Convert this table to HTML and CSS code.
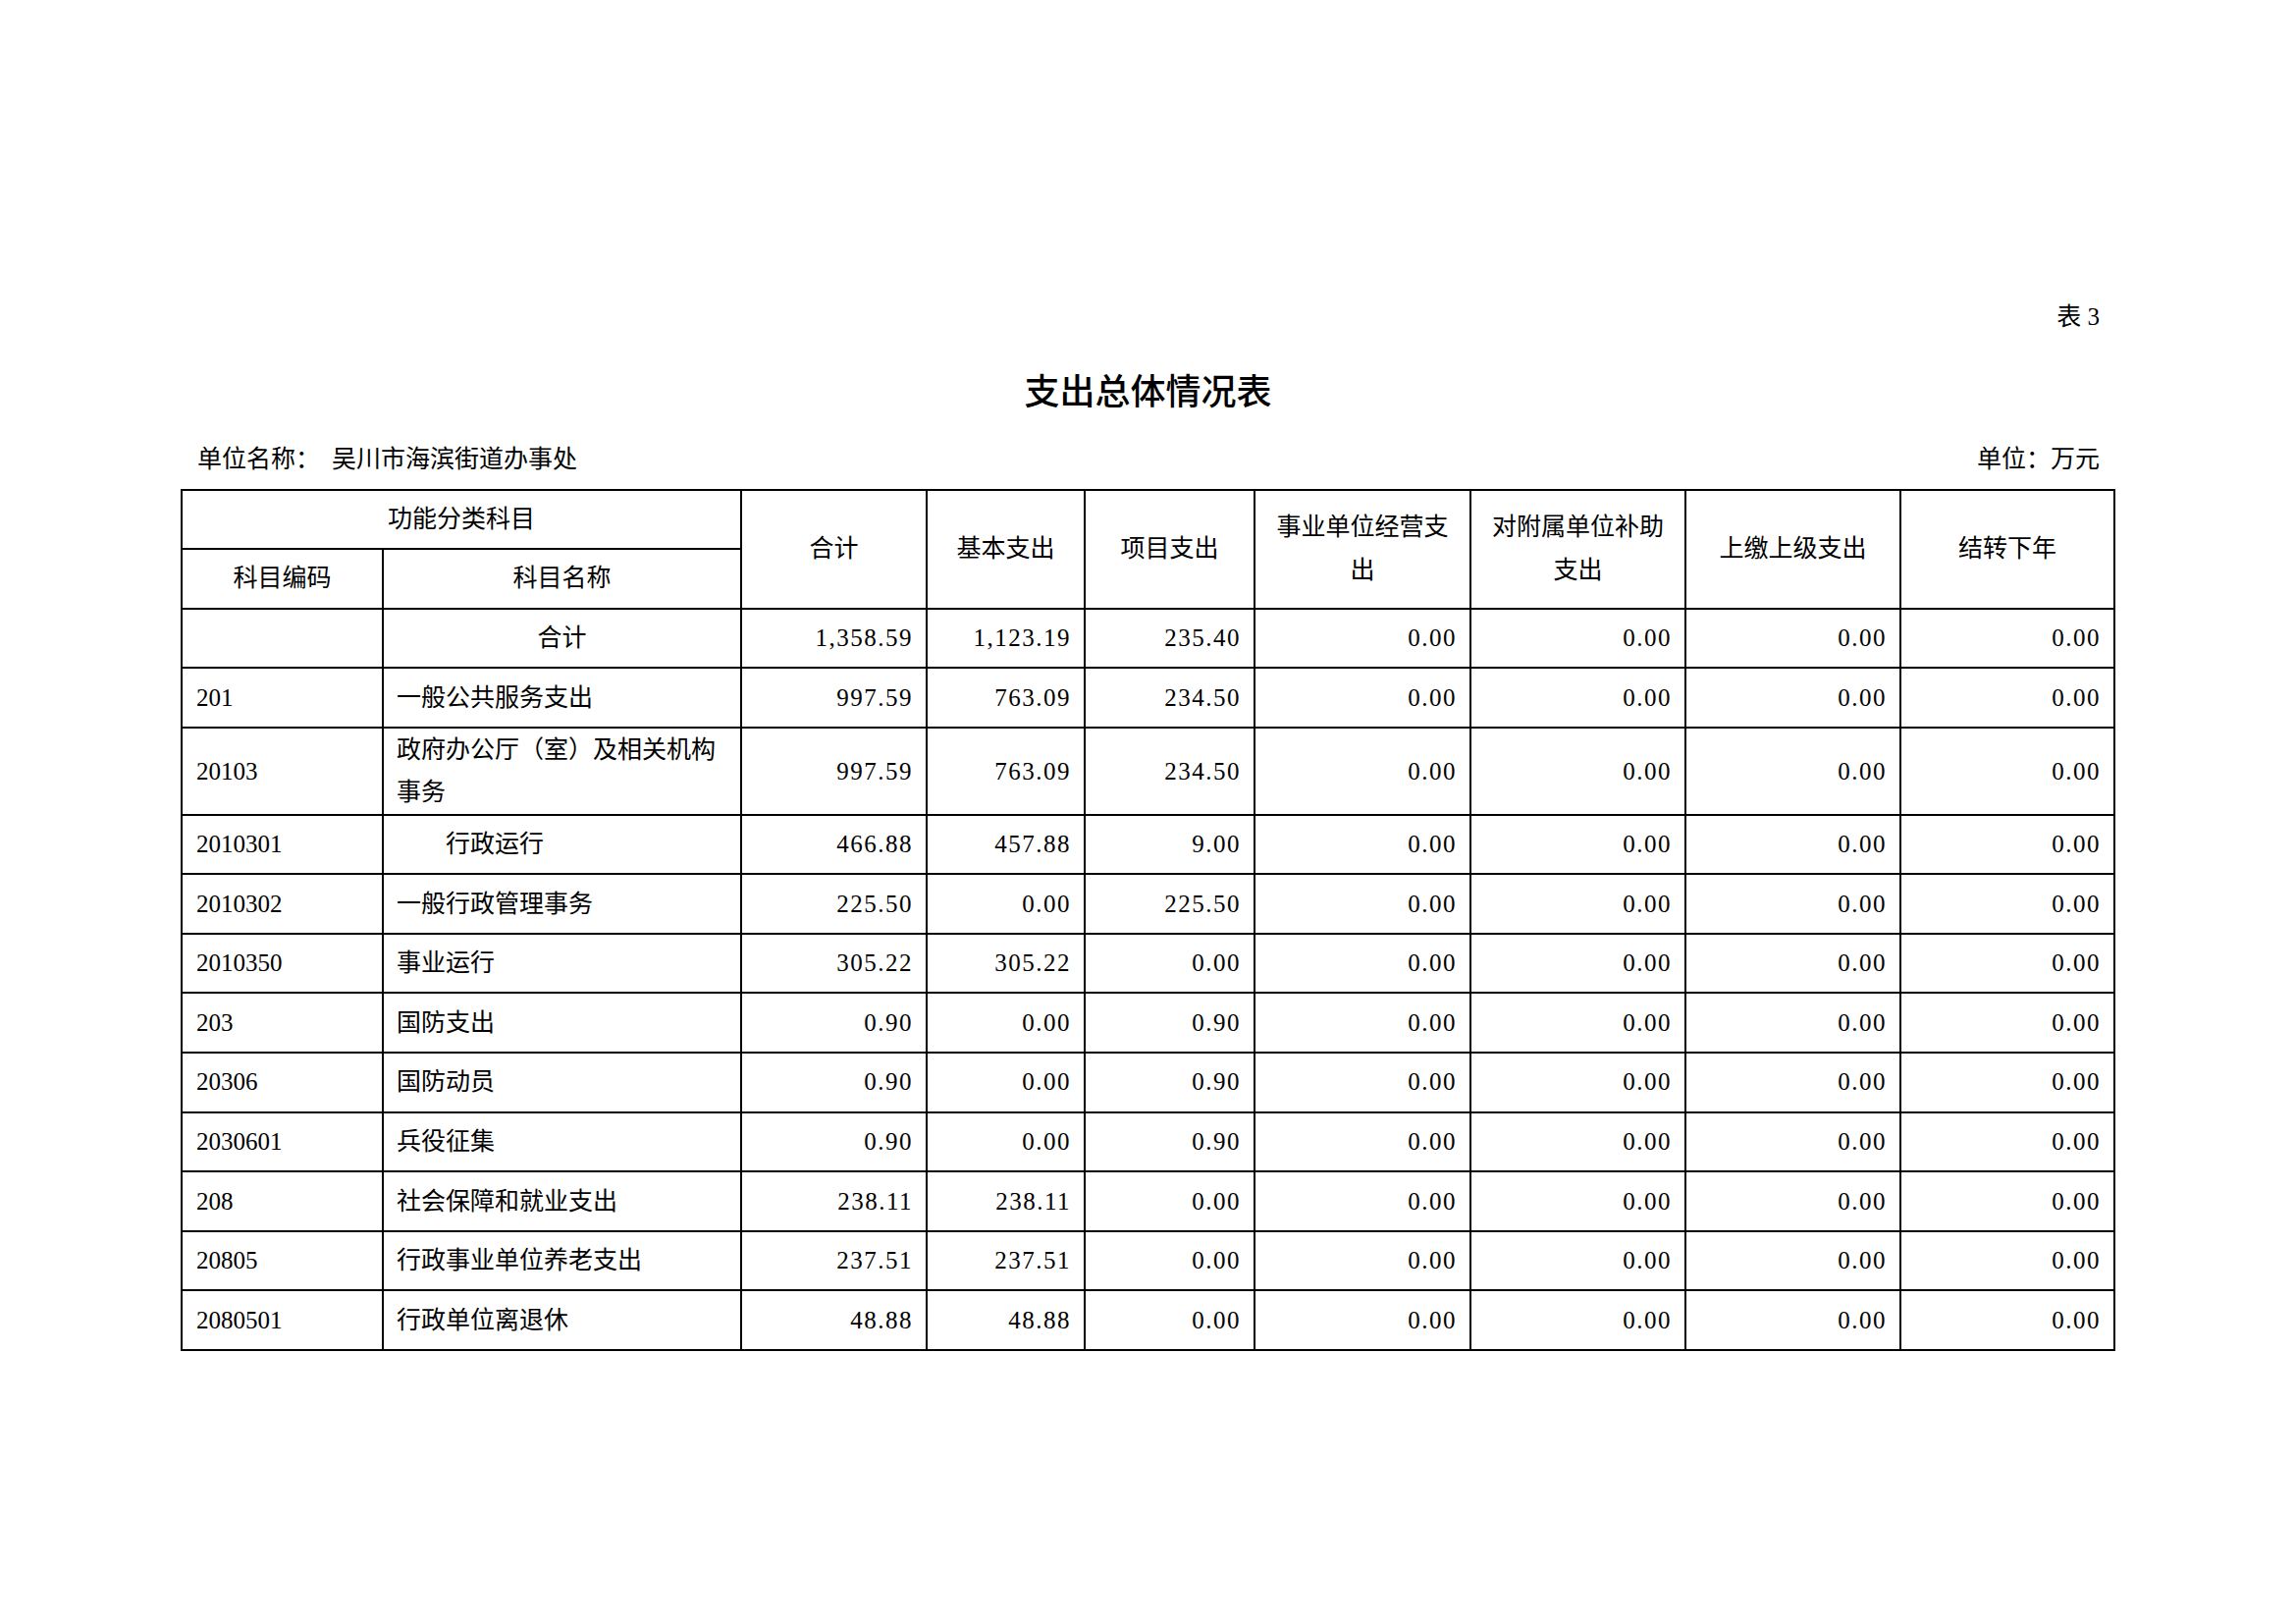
FILE: index.html
```html
<!DOCTYPE html>
<html lang="zh-CN">
<head>
<meta charset="utf-8">
<title>支出总体情况表</title>
<link rel="stylesheet" href="styles.css">
</head>
<body>
<div class="page">
  <div class="sheet">
    <div class="tag">表 3</div>
    <h1 class="title">支出总体情况表</h1>
    <div class="meta">
      <div class="meta-left">单位名称：<span class="unit">吴川市海滨街道办事处</span></div>
      <div class="meta-right">单位：万元</div>
    </div>
    <table class="report">
      <colgroup>
        <col class="c1"><col class="c2"><col class="c3"><col class="c4"><col class="c5"><col class="c6"><col class="c7"><col class="c8"><col class="c9">
      </colgroup>
      <thead>
        <tr class="h1">
          <th colspan="2">功能分类科目</th>
          <th rowspan="2">合计</th>
          <th rowspan="2">基本支出</th>
          <th rowspan="2">项目支出</th>
          <th rowspan="2">事业单位经营支出</th>
          <th rowspan="2">对附属单位补助支出</th>
          <th rowspan="2">上缴上级支出</th>
          <th rowspan="2">结转下年</th>
        </tr>
        <tr class="h2">
          <th>科目编码</th>
          <th>科目名称</th>
        </tr>
      </thead>
      <tbody>
        <tr><td class="code"></td><td class="name center">合计</td><td class="num">1,358.59</td><td class="num">1,123.19</td><td class="num">235.40</td><td class="num">0.00</td><td class="num">0.00</td><td class="num">0.00</td><td class="num">0.00</td></tr>
        <tr><td class="code">201</td><td class="name">一般公共服务支出</td><td class="num">997.59</td><td class="num">763.09</td><td class="num">234.50</td><td class="num">0.00</td><td class="num">0.00</td><td class="num">0.00</td><td class="num">0.00</td></tr>
        <tr class="tall"><td class="code">20103</td><td class="name">政府办公厅（室）及相关机构事务</td><td class="num">997.59</td><td class="num">763.09</td><td class="num">234.50</td><td class="num">0.00</td><td class="num">0.00</td><td class="num">0.00</td><td class="num">0.00</td></tr>
        <tr><td class="code">2010301</td><td class="name indent">行政运行</td><td class="num">466.88</td><td class="num">457.88</td><td class="num">9.00</td><td class="num">0.00</td><td class="num">0.00</td><td class="num">0.00</td><td class="num">0.00</td></tr>
        <tr><td class="code">2010302</td><td class="name">一般行政管理事务</td><td class="num">225.50</td><td class="num">0.00</td><td class="num">225.50</td><td class="num">0.00</td><td class="num">0.00</td><td class="num">0.00</td><td class="num">0.00</td></tr>
        <tr><td class="code">2010350</td><td class="name">事业运行</td><td class="num">305.22</td><td class="num">305.22</td><td class="num">0.00</td><td class="num">0.00</td><td class="num">0.00</td><td class="num">0.00</td><td class="num">0.00</td></tr>
        <tr><td class="code">203</td><td class="name">国防支出</td><td class="num">0.90</td><td class="num">0.00</td><td class="num">0.90</td><td class="num">0.00</td><td class="num">0.00</td><td class="num">0.00</td><td class="num">0.00</td></tr>
        <tr><td class="code">20306</td><td class="name">国防动员</td><td class="num">0.90</td><td class="num">0.00</td><td class="num">0.90</td><td class="num">0.00</td><td class="num">0.00</td><td class="num">0.00</td><td class="num">0.00</td></tr>
        <tr><td class="code">2030601</td><td class="name">兵役征集</td><td class="num">0.90</td><td class="num">0.00</td><td class="num">0.90</td><td class="num">0.00</td><td class="num">0.00</td><td class="num">0.00</td><td class="num">0.00</td></tr>
        <tr><td class="code">208</td><td class="name">社会保障和就业支出</td><td class="num">238.11</td><td class="num">238.11</td><td class="num">0.00</td><td class="num">0.00</td><td class="num">0.00</td><td class="num">0.00</td><td class="num">0.00</td></tr>
        <tr><td class="code">20805</td><td class="name">行政事业单位养老支出</td><td class="num">237.51</td><td class="num">237.51</td><td class="num">0.00</td><td class="num">0.00</td><td class="num">0.00</td><td class="num">0.00</td><td class="num">0.00</td></tr>
        <tr><td class="code">2080501</td><td class="name">行政单位离退休</td><td class="num">48.88</td><td class="num">48.88</td><td class="num">0.00</td><td class="num">0.00</td><td class="num">0.00</td><td class="num">0.00</td><td class="num">0.00</td></tr>
      </tbody>
    </table>
  </div>
</div>
</body>
</html>
```

FILE: styles.css
```css
html, body {
  margin: 0;
  padding: 0;
  background: #ffffff;
}

body {
  font-family: "Liberation Serif", "Noto Sans CJK SC", serif;
  color: #000000;
  font-size: 25px;
}

.page {
  width: 2339px;
  min-height: 1654px;
  box-sizing: border-box;
  padding-top: 303px;
}

.sheet {
  margin-left: 184px;
  width: 1971px;
}

.tag {
  line-height: 40px;
  height: 40px;
  text-align: right;
  padding-right: 16px;
}

.title {
  margin: 27px 0 0 0;
  font-family: "Noto Sans CJK SC", sans-serif;
  font-weight: 500;
  font-size: 36px;
  line-height: 52px;
  height: 52px;
  text-align: center;
}

.meta {
  margin-top: 26px;
  display: flex;
  justify-content: space-between;
  line-height: 40px;
  height: 40px;
  padding: 0 16px 0 17px;
}

.unit {
  margin-left: 12px;
}

.report {
  margin-top: 10px;
  border-collapse: collapse;
  table-layout: fixed;
  width: 1971px;
}

.c1 { width: 205px; }
.c2 { width: 365px; }
.c3 { width: 189px; }
.c4 { width: 161px; }
.c5 { width: 173px; }
.c6 { width: 220px; }
.c7 { width: 219px; }
.c8 { width: 219px; }
.c9 { width: 218px; }

.report th,
.report td {
  border: 2px solid #000000;
  font-weight: 400;
  padding: 0 14px;
  line-height: 44px;
  vertical-align: middle;
}

.report th {
  text-align: center;
}

.report .h1 th {
  height: 57.5px;
}

.report .h2 th {
  height: 59.2px;
}

.report tbody tr td {
  height: 58.6px;
}

.report tbody tr.tall td {
  height: 86.8px;
  line-height: 43px;
}

.report .code {
  text-align: left;
}

.report .name {
  text-align: left;
  padding-left: 13px;
}

.report .name.center {
  text-align: center;
  padding-left: 14px;
}

.report .name.indent {
  padding-left: 63px;
}

.report .num {
  text-align: right;
  letter-spacing: 1.5px;
  padding-right: 13px;
}
```
